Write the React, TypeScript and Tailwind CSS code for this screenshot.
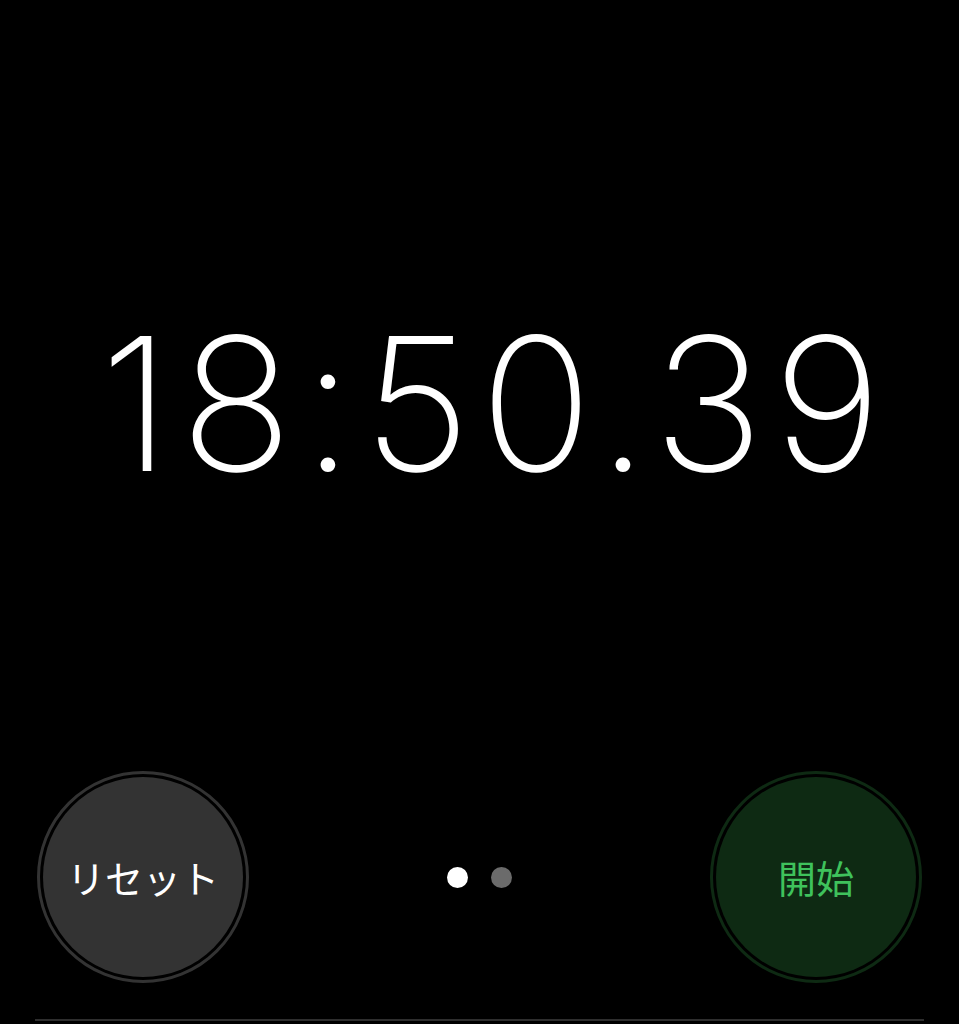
import React from "react";

export default function App() {
  return (
    <div className="w-[959px] h-[1024px] bg-black flex flex-col overflow-hidden" style={{ fontFamily: '"Inter", "Noto Sans CJK JP", sans-serif' }}>
      <div className="h-[299px]" />
      <div className="flex justify-center pl-[32px]">
        <div className="text-white text-[186px] leading-[210px] font-[150] tracking-[9.5px]">18:50.39</div>
      </div>
      <div className="flex-1" />
      <div className="flex items-center justify-between pl-[37px] pr-[37px]">
        <div className="w-[212px] h-[212px] rounded-full border-[3px] border-[#333333] p-[3px]">
          <div className="w-full h-full rounded-full bg-[#333333] flex items-center justify-center">
            <span className="text-white text-[38px] leading-none" style={{ fontFamily: '"Noto Sans CJK JP", sans-serif' }}>リセット</span>
          </div>
        </div>
        <div className="flex items-center gap-[23px]">
          <div className="w-[21px] h-[21px] rounded-full bg-white" />
          <div className="w-[21px] h-[21px] rounded-full bg-[#6b6b6b]" />
        </div>
        <div className="w-[212px] h-[212px] rounded-full border-[3px] border-[#0e2a13] p-[3px]">
          <div className="w-full h-full rounded-full bg-[#0e2a13] flex items-center justify-center">
            <span className="text-[#3fc25c] text-[38px] leading-none" style={{ fontFamily: '"Noto Sans CJK JP", sans-serif' }}>開始</span>
          </div>
        </div>
      </div>
      <div className="h-[36px]" />
      <div className="mx-[35px] h-[2px] bg-[#2e2e2e]" />
      <div className="h-[3px]" />
    </div>
  );
}
